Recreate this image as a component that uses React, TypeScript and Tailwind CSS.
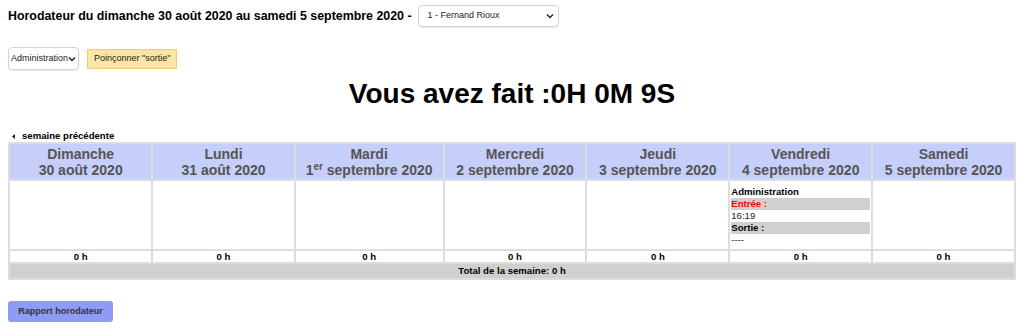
import React from 'react'

const DAYS = [
  { name: 'Dimanche', w: 'w-[14.25%]', date: <>30 août 2020</> },
  { name: 'Lundi', w: 'w-[14.15%]', date: <>31 août 2020</> },
  { name: 'Mardi', w: 'w-[14.8%]', date: <>1<span className="relative -top-[5px] text-[10px] leading-none">er</span> septembre 2020</> },
  { name: 'Mercredi', w: 'w-[14.2%]', date: <>2 septembre 2020</> },
  { name: 'Jeudi', w: 'w-[14.2%]', date: <>3 septembre 2020</> },
  { name: 'Vendredi', w: 'w-[14.2%]', date: <>4 septembre 2020</> },
  { name: 'Samedi', w: 'w-[14.2%]', date: <>5 septembre 2020</> },
]

function Chevron() {
  return (
    <svg width="8" height="6" viewBox="0 0 8 6" className="shrink-0">
      <path d="M1 1.5 L4 4.5 L7 1.5" fill="none" stroke="#222" strokeWidth="1.4" />
    </svg>
  )
}

function FakeSelect({ label, className }: { label: string; className: string }) {
  return (
    <div className={`flex items-center justify-between bg-white border border-[#d4d4d4] rounded-[4px] shadow-[0_1px_1px_rgba(0,0,0,0.08)] text-[9px] text-[#222] ${className}`}>
      <span>{label}</span>
      <Chevron />
    </div>
  )
}

function Punch() {
  return (
    <div className="text-[9.6px] leading-[12px] text-left">
      <div className="font-bold text-black">Administration</div>
      <div className="bg-[#d0d0d0] font-bold text-[#f00]">Entrée :</div>
      <div className="text-[#222]">16:19</div>
      <div className="bg-[#d0d0d0] font-bold text-black">Sortie :</div>
      <div className="text-[#222]">----</div>
    </div>
  )
}

export default function App() {
  return (
    <div className="w-[1024px] h-[330px] bg-white px-2 font-['Liberation_Sans',Arial,sans-serif] text-black">
      {/* title + employee */}
      <div className="flex items-center pt-[5px] h-[27px]">
        <h1 className="text-[12.4px] font-bold">Horodateur du dimanche 30 août 2020 au samedi 5 septembre 2020 -</h1>
        <FakeSelect label="1 - Fernand Rioux" className="ml-[6px] w-[141px] h-[22px] pl-[9px] pr-[4px]" />
      </div>

      {/* punch controls */}
      <div className="flex items-center gap-[8px] mt-[20px]">
        <FakeSelect label="Administration" className="w-[71px] h-[23px] pl-[2px] pr-[2px]" />
        <button className="h-[20px] px-[6px] bg-[#fde5a7] border border-[#f2cb78] text-[9px] text-[#222]">
          Poinçonner "sortie"
        </button>
      </div>

      <div className="text-center mt-[7px] text-[28px] leading-[34px] font-bold">
        Vous avez fait :0H 0M 9S
      </div>

      {/* previous week */}
      <div className="flex items-center gap-[7px] mt-[20px] pl-[4px] text-[9.6px] font-bold h-[10px]">
        <svg width="3" height="5" viewBox="0 0 3 5"><path d="M3 0 L0 2.5 L3 5 Z" fill="#222" /></svg>
        semaine précédente
      </div>

      <table className="w-full table-fixed mt-[1px] border-collapse border-2 border-[#ddd]">
        <colgroup>
          {DAYS.map(d => <col key={d.name} className={d.w} />)}
        </colgroup>
        <thead>
          <tr className="bg-[#c6cefa]">
            {DAYS.map(d => (
              <th key={d.name} className="border-2 border-[#ddd] h-[37px] px-0 pt-[1px] text-[14px] leading-[16px] font-bold text-[#555] whitespace-nowrap">
                {d.name}
                <br />
                {d.date}
              </th>
            ))}
          </tr>
        </thead>
        <tbody>
          <tr>
            {DAYS.map(d => (
              <td key={d.name} className="border-2 border-[#ddd] h-[70px] px-[1px] pt-[5px] pb-0 align-top">
                {d.name === 'Vendredi' && <Punch />}
              </td>
            ))}
          </tr>
          <tr>
            {DAYS.map(d => (
              <td key={d.name} className="border-2 border-[#ddd] h-[13px] text-center text-[9.6px] leading-[10px] font-bold">
                0 h
              </td>
            ))}
          </tr>
          <tr className="bg-[#d0d0d0]">
            <td colSpan={7} className="h-[16px] text-center text-[9.6px] leading-[10px] font-bold">
              Total de la semaine: 0 h
            </td>
          </tr>
        </tbody>
      </table>

      <button className="mt-[21px] w-[105px] h-[21px] rounded-[3px] bg-[#8e9bf8] text-[9px] font-bold text-[#333]">
        Rapport horodateur
      </button>
    </div>
  )
}
